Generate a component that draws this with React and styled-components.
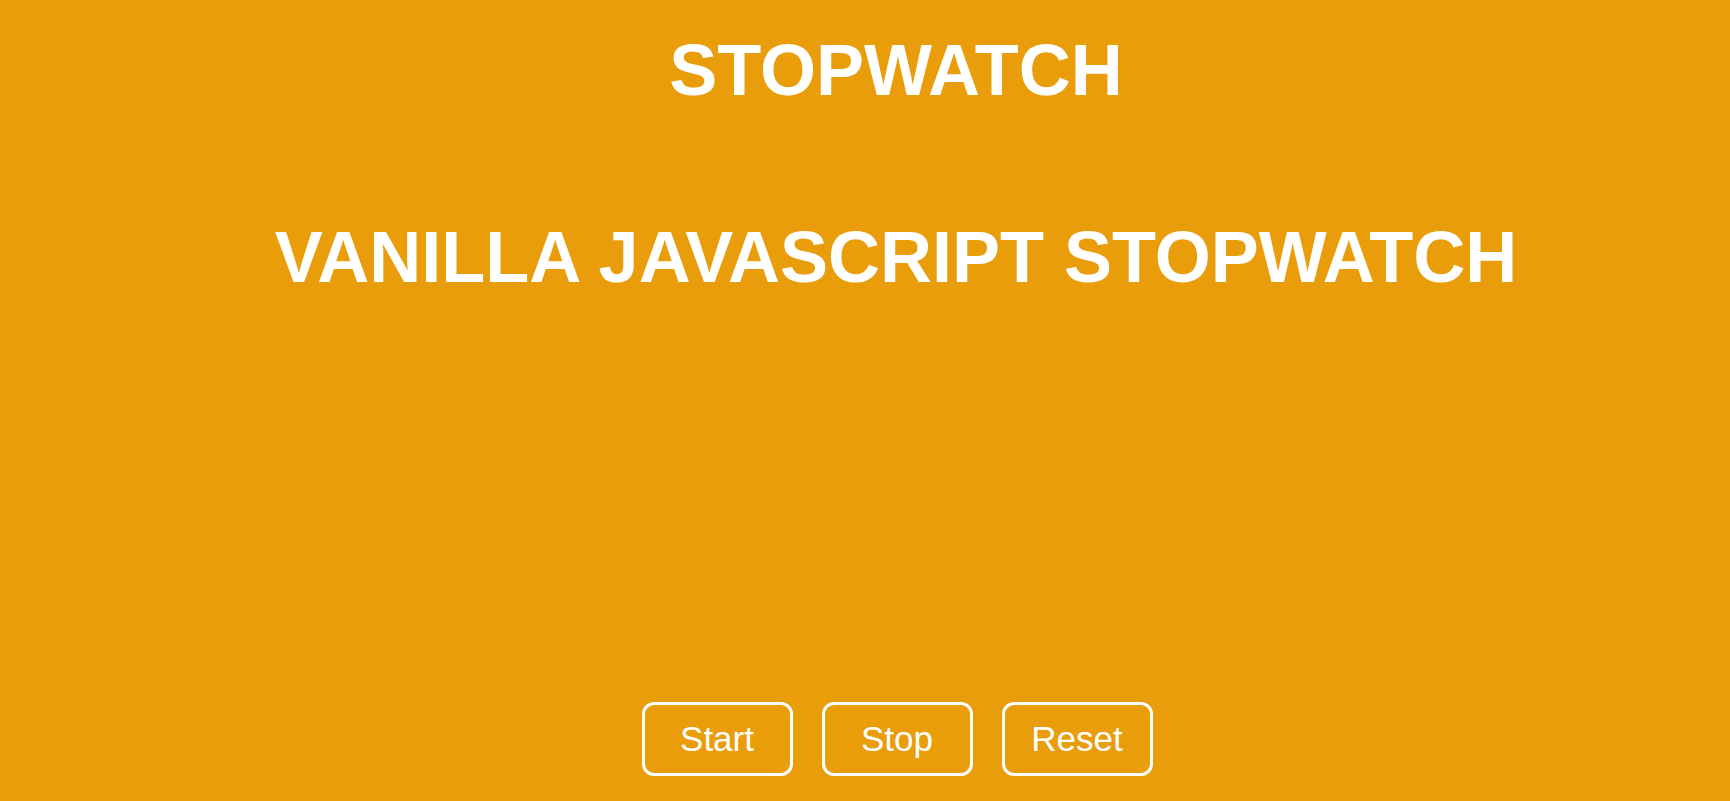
import React from "react";
import styled, { createGlobalStyle } from "styled-components";

const Global = createGlobalStyle`
  html, body {
    margin: 0;
    padding: 0;
    background: #EA9D0B;
  }
  body {
    font-family: "Liberation Sans", Arial, sans-serif;
  }
`;

const Page = styled.main`
  min-height: 801px;
  box-sizing: border-box;
  display: flex;
  flex-direction: column;
  align-items: center;
  padding-left: 56px;
  background: #EA9D0B;
  color: #ffffff;
`;

const Title = styled.h1`
  margin: 29px 0 0;
  padding-left: 6px;
  font-size: 72px;
  font-weight: 700;
  line-height: normal;
`;

const Subtitle = styled.h2`
  margin: 105px 0 0;
  padding-left: 6px;
  font-size: 72px;
  font-weight: 700;
  line-height: normal;
`;

const Display = styled.div`
  height: 404px;
`;

const Controls = styled.div`
  display: flex;
  gap: 29px;
  padding-left: 8px;
`;

const Button = styled.button`
  width: 151px;
  height: 74px;
  box-sizing: border-box;
  border: 3px solid #ffffff;
  border-radius: 12px;
  background: transparent;
  color: #ffffff;
  font-family: "Liberation Sans", Arial, sans-serif;
  font-size: 35px;
  font-weight: 400;
  padding: 0;
  cursor: pointer;
`;

export default function App() {
  return (
    <>
      <Global />
      <Page>
        <Title>STOPWATCH</Title>
        <Subtitle>VANILLA JAVASCRIPT STOPWATCH</Subtitle>
        <Display />
        <Controls>
          <Button>Start</Button>
          <Button>Stop</Button>
          <Button>Reset</Button>
        </Controls>
      </Page>
    </>
  );
}
